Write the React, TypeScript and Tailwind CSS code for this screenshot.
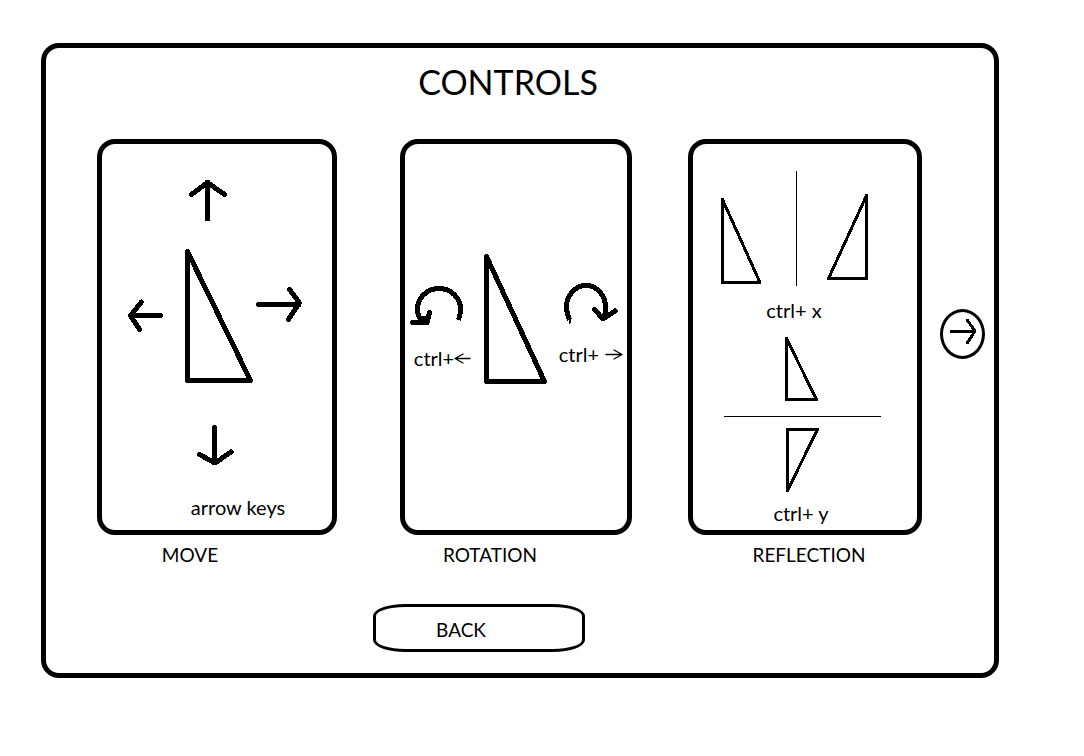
import type { ReactNode } from "react";

type DrawingProps = {
  viewBox: string;
  className: string;
  stroke?: number;
  children: ReactNode;
};

function Drawing({ viewBox, className, stroke = 5, children }: DrawingProps) {
  return (
    <svg
      viewBox={viewBox}
      className={className}
      fill="none"
      stroke="black"
      strokeWidth={stroke}
      strokeLinecap="round"
      strokeLinejoin="round"
      shapeRendering="crispEdges"
      aria-hidden="true"
    >
      {children}
    </svg>
  );
}

type PanelProps = {
  title: string;
  className: string;
  captionClass: string;
  children: ReactNode;
};

function Panel({ title, className, captionClass, children }: PanelProps) {
  return (
    <figure className={`flex min-w-0 flex-col ${className}`}>
      <div className="flex min-h-[396px] flex-1 flex-col rounded-[18px] border-5 border-black text-[20px]">
        {children}
      </div>
      <figcaption className={`mt-1.5 text-center ${captionClass}`}>{title}</figcaption>
    </figure>
  );
}

export default function App() {
  return (
    <main className="min-h-screen bg-white pt-[43px] pr-[85px] pb-10 pl-[41px] font-['Lato',sans-serif] text-[19px] leading-7 text-black">
      <section className="rounded-[18px] border-5 border-black pt-3 pb-[21px]">
        <h1 className="pr-6 text-center text-[34px] leading-[44px]">CONTROLS</h1>

        <div className="mt-[35px] flex pr-[9px] pl-[51px]">
          <Panel title="MOVE" className="flex-[240]" captionClass="pr-[54px]">
            <Drawing viewBox="102 144 230 349" className="mx-auto h-[349px] w-[230px]">
              <path d="M207.5 219V182M191.5 194.5l16-12 17 12" />
              <path d="M160.5 315.5H130.5M141.5 302l-11 13.5 9 14" />
              <path d="M258.5 304.5H299M289.5 289.5l10 13.5-11 16.5" />
              <path d="M214.5 427.5V463M199.5 454.5l15.5 8.5 16-11" />
              <path d="M187.5 251.5V380.5H250.5Z" />
            </Drawing>
            <p className="pl-[42px] text-center">arrow keys</p>
          </Panel>

          <Panel title="ROTATION" className="ml-[63px] flex-[232]" captionClass="pr-[52px]">
            <div className="flex justify-center pt-[104px]">
              <div className="w-[75px]">
                <Drawing viewBox="405 248 75 96" className="h-24 w-[75px]">
                  <path
                    d="M458.5 320C460 316 460.5 312 460.5 309A21.5 20.5 0 0 0 417.5 309C417.5 314 418.5 317 421 320"
                    strokeLinecap="butt"
                  />
                  <path d="M412.5 322.5H427L429.5 312.5" />
                  <path d="M420 318L426 319" />
                </Drawing>
                <p className="flex items-center justify-center">
                  ctrl+
                  <Drawing viewBox="0 0 17 14" className="h-3.5 w-[17px]" stroke={1}>
                    <path
                      d="M16 7.5H1M9 3L1 7.5l8 4.5"
                      strokeWidth={1.3}
                      shapeRendering="auto"
                    />
                  </Drawing>
                </p>
              </div>
              <Drawing viewBox="480 248 72 140" className="h-[140px] w-[72px]">
                <path d="M486.5 256.5V381.5H544.5Z" />
              </Drawing>
              <div className="w-[75px]">
                <Drawing viewBox="552 248 75 92" className="h-[92px] w-[75px]">
                  <path
                    d="M569.5 320C567.5 315 566.5 311 566.5 307A19.5 21.5 0 0 1 605.5 307C605.5 311 605 315 603.5 319"
                    strokeLinecap="butt"
                  />
                  <path d="M569.5 319V323" strokeWidth={2} />
                  <path d="M594.5 309.5l8.5 9.5 12-8" />
                </Drawing>
                <p className="flex items-center justify-end gap-1.5 pr-1">
                  ctrl+
                  <Drawing viewBox="0 0 18 14" className="h-3.5 w-[18px]" stroke={1}>
                    <path
                      d="M1 7.5H17M9 3l8 4.5-8 4.5"
                      strokeWidth={1.3}
                      shapeRendering="auto"
                    />
                  </Drawing>
                </p>
              </div>
            </div>
          </Panel>

          <Panel title="REFLECTION" className="ml-14 flex-[234]" captionClass="pl-2">
            <Drawing
              viewBox="693 144 224 152"
              className="mx-auto h-[152px] w-[224px]"
              stroke={3}
            >
              <path d="M722.5 199.5V282.5H760Z" />
              <path d="M866.5 195.5V278.5H828.5Z" />
              <path d="M796.5 171V286" strokeWidth={1} strokeLinecap="butt" />
            </Drawing>
            <p className="pr-[22px] text-center">ctrl+ x</p>
            <Drawing
              viewBox="693 324 224 175"
              className="mx-auto h-[175px] w-[224px]"
              stroke={3}
            >
              <path d="M786.5 338.5V399.5H816.5Z" />
              <path d="M724 416.5H881" strokeWidth={1} strokeLinecap="butt" />
              <path d="M787.5 490.5V429.5H817.5Z" />
            </Drawing>
            <p className="pr-2 text-center">ctrl+ y</p>
          </Panel>

          <button
            type="button"
            aria-label="Next page"
            className="mb-10 ml-[18px] flex h-[50px] w-[45px] shrink-0 items-center justify-center self-center rounded-[50%] border-3 border-black"
          >
            <Drawing viewBox="948 319 30 30" className="h-[30px] w-[30px]" stroke={3}>
              <path d="M951.5 331.5H975M967.5 320.5l7.5 10.5-7.5 11.5" />
            </Drawing>
          </button>
        </div>

        <div className="mt-[35px] flex justify-center pr-[82px]">
          <button
            type="button"
            className="h-12 w-[212px] rounded-[32px/12px] border-3 border-black pt-1 pr-9"
          >
            BACK
          </button>
        </div>
      </section>
    </main>
  );
}
